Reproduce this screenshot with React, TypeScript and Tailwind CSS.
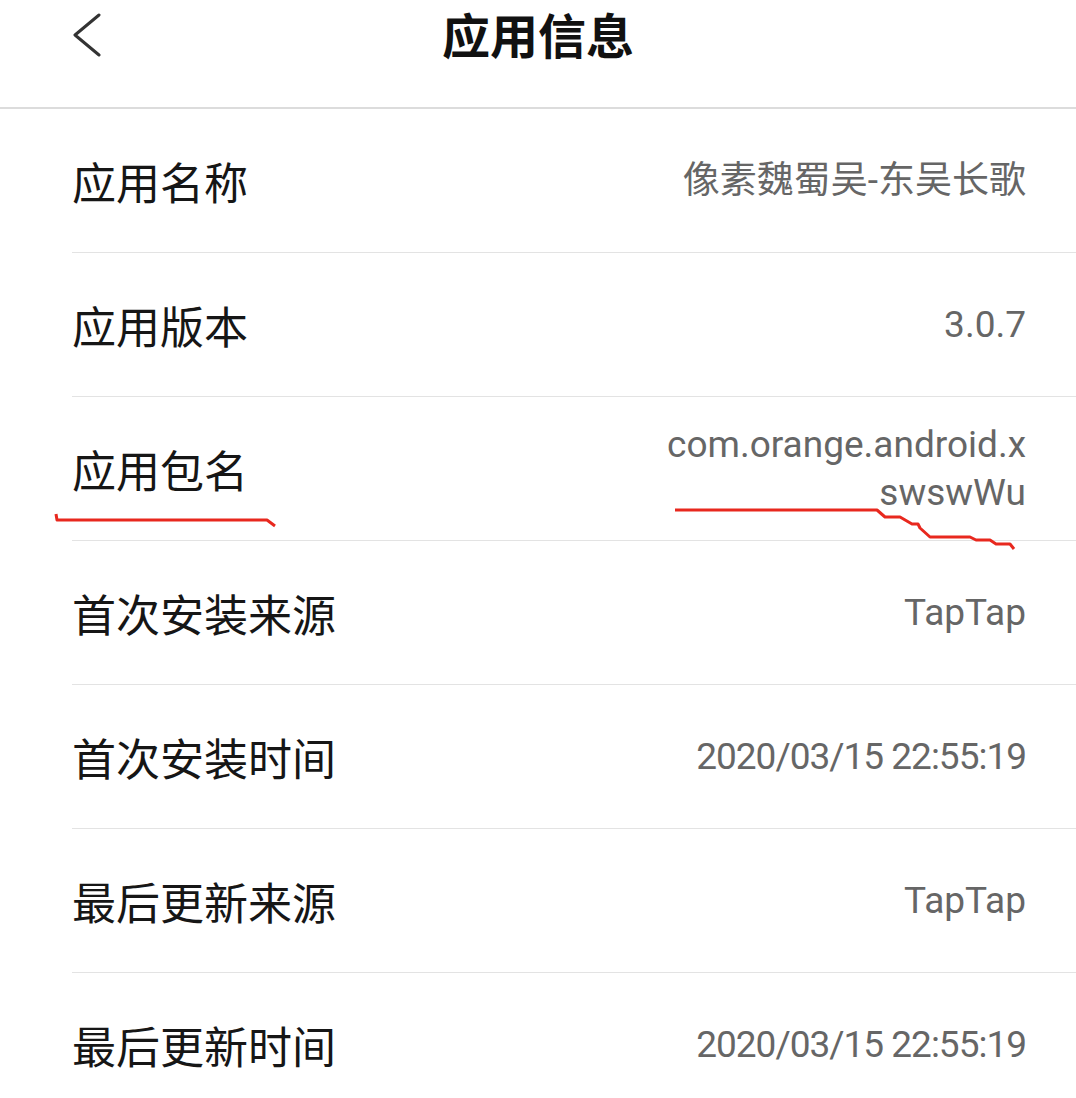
import React from 'react';

const rows: { label: string; value: string[]; tight?: boolean }[] = [
  { label: '应用名称', value: ['像素魏蜀吴-东吴长歌'] },
  { label: '应用版本', value: ['3.0.7'] },
  { label: '应用包名', value: ['com.orange.android.x', 'swswWu'] },
  { label: '首次安装来源', value: ['TapTap'] },
  { label: '首次安装时间', value: ['2020/03/15 22:55:19'], tight: true },
  { label: '最后更新来源', value: ['TapTap'] },
  { label: '最后更新时间', value: ['2020/03/15 22:55:19'], tight: true },
];

const BackIcon = () => (
  <svg width="30" height="44" viewBox="0 0 30 44" fill="none">
    <polyline points="27,2 3,22 27,42" stroke="#333" strokeWidth="3" strokeLinecap="round" strokeLinejoin="round" />
  </svg>
);

export default function App() {
  return (
    <div
      className="relative w-full min-h-[1098px] bg-white"
      style={{ fontFamily: 'Roboto, "Noto Sans CJK SC", sans-serif' }}
    >
      <header className="h-[109px] border-b-2 border-[#dcdcdc] grid grid-cols-[1fr_auto_1fr] items-start pt-[3px]">
        <div className="pl-[72px] pt-[10px]">
          <BackIcon />
        </div>
        <h1
          className="whitespace-nowrap text-[48px] leading-[60px] font-bold text-[#111]"
          style={{ fontFamily: '"Noto Sans CJK SC", sans-serif' }}
        >
          应用信息
        </h1>
        <div />
      </header>

      <div className="pl-[72px]">
        {rows.map((row, i) => (
          <div
            key={row.label}
            className={`h-[144px] flex items-center justify-between pr-[50px] ${
              i < rows.length - 1 ? 'border-b border-[#e3e3e3]' : ''
            }`}
          >
            <span
              className="text-[44px] leading-[52px] text-[#161616]"
              style={{ fontFamily: '"Noto Sans CJK SC", sans-serif' }}
            >
              {row.label}
            </span>
            <div
              className={`text-right text-[37px] leading-[48px] text-[#666] ${row.tight ? 'tracking-[-1px]' : ''}`}
            >
              {row.value.map((v) => (
                <div key={v}>{v}</div>
              ))}
            </div>
          </div>
        ))}
      </div>

      {/* hand-drawn red marks */}
      <svg className="absolute left-0 top-0 pointer-events-none" width="1076" height="1098">
        <polyline
          points="56,514 57,520 267,520 275,526"
          fill="none"
          stroke="#e8281e"
          strokeWidth="3"
          strokeLinejoin="round"
        />
        <polyline
          points="675,510 877,510 885,517 900,517 912,524 918,524 920,528 930,537 970,537 976,540 990,540 996,544 1010,544 1014,549"
          fill="none"
          stroke="#e8281e"
          strokeWidth="3"
          strokeLinejoin="round"
        />
      </svg>
    </div>
  );
}
